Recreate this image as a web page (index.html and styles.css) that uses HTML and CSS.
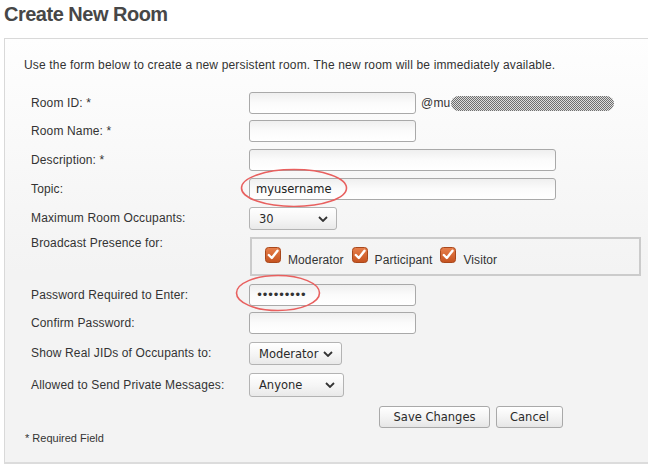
FILE: index.html
```html
<!DOCTYPE html>
<html>
<head>
<meta charset="utf-8">
<link rel="stylesheet" href="styles.css">
</head>
<body>
<h1 class="title">Create New Room</h1>
<div class="panel">
  <p class="intro">Use the form below to create a new persistent room. The new room will be immediately available.</p>
  <div class="form">
    <div class="label">Room ID: *</div>
    <div class="cell"><input class="text short" type="text"><span class="domain">@mu</span><span class="scribble"></span></div>

    <div class="label">Room Name: *</div>
    <div class="cell"><input class="text short" type="text"></div>

    <div class="label">Description: *</div>
    <div class="cell"><input class="text long" type="text"></div>

    <div class="label">Topic:</div>
    <div class="cell"><input class="text long" type="text" value="myusername">
      <svg class="mark mark-topic" width="108" height="40" viewBox="0 0 108 40"><ellipse cx="54" cy="20" rx="52.5" ry="18.5" fill="none" stroke="#e8605f" stroke-width="1.6"/></svg>
    </div>

    <div class="label">Maximum Room Occupants:</div>
    <div class="cell"><div class="select sel-occ"><span>30</span><svg width="10" height="6" viewBox="0 0 10 6"><path d="M1 1 L5 5 L9 1" fill="none" stroke="#333" stroke-width="1.8"/></svg></div></div>

    <div class="label label-top">Broadcast Presence for:</div>
    <div class="cell">
      <div class="presence">
        <span class="cb"><svg width="16" height="16" viewBox="0 0 16 16"><defs><linearGradient id="og" x1="0" y1="0" x2="0" y2="1"><stop offset="0" stop-color="#e8804c"/><stop offset="1" stop-color="#c5521f"/></linearGradient></defs><rect x="0.5" y="0.5" width="15" height="15" rx="3" fill="url(#og)" stroke="#a8481c"/><path d="M3.8 8 L6.8 11 L12.5 3.8" fill="none" stroke="#fff" stroke-width="2.4" stroke-linecap="round" stroke-linejoin="round"/></svg></span>
        <span class="cbtext">Moderator</span>
        <span class="cb"><svg width="16" height="16" viewBox="0 0 16 16"><rect x="0.5" y="0.5" width="15" height="15" rx="3" fill="url(#og)" stroke="#a8481c"/><path d="M3.8 8 L6.8 11 L12.5 3.8" fill="none" stroke="#fff" stroke-width="2.4" stroke-linecap="round" stroke-linejoin="round"/></svg></span>
        <span class="cbtext">Participant</span>
        <span class="cb"><svg width="16" height="16" viewBox="0 0 16 16"><rect x="0.5" y="0.5" width="15" height="15" rx="3" fill="url(#og)" stroke="#a8481c"/><path d="M3.8 8 L6.8 11 L12.5 3.8" fill="none" stroke="#fff" stroke-width="2.4" stroke-linecap="round" stroke-linejoin="round"/></svg></span>
        <span class="cbtext">Visitor</span>
      </div>
    </div>

    <div class="label">Password Required to Enter:</div>
    <div class="cell"><input class="text short pw" type="password" value="123456789">
      <svg class="mark mark-pw" width="86" height="38" viewBox="0 0 86 38"><ellipse cx="43" cy="19" rx="41.5" ry="17.5" fill="none" stroke="#e8605f" stroke-width="1.6"/></svg>
    </div>

    <div class="label">Confirm Password:</div>
    <div class="cell"><input class="text short" type="password"></div>

    <div class="label lh23">Show Real JIDs of Occupants to:</div>
    <div class="cell"><div class="select sel-jid"><span>Moderator</span><svg width="10" height="6" viewBox="0 0 10 6"><path d="M1 1 L5 5 L9 1" fill="none" stroke="#333" stroke-width="1.8"/></svg></div></div>

    <div class="label lh24">Allowed to Send Private Messages:</div>
    <div class="cell"><div class="select sel-pm"><span>Anyone</span><svg width="10" height="6" viewBox="0 0 10 6"><path d="M1 1 L5 5 L9 1" fill="none" stroke="#333" stroke-width="1.8"/></svg></div></div>

    <div></div>
    <div class="cell buttons"><button class="btn btn-save">Save Changes</button><button class="btn btn-cancel">Cancel</button></div>
  </div>
  <p class="required">* Required Field</p>
</div>
</body>
</html>
```
FILE: styles.css
```css
html, body {
  margin: 0;
  padding: 0;
  background: #fff;
  overflow: hidden;
}
body {
  font-family: "Liberation Sans", Arial, sans-serif;
  color: #333;
  width: 648px;
  height: 471px;
}
.title {
  margin: 0 0 12px 0;
  padding: 2px 0 0 4px;
  font-size: 20px;
  line-height: 24px;
  font-weight: bold;
  letter-spacing: -0.5px;
  color: #474747;
}
.panel {
  margin: 0 -20px 0 4px;
  border: 1px solid #d9d9d9;
  border-bottom: 2px solid #dcdcdc;
  background: linear-gradient(#fefefe, #f3f3f3 55%, #f3f3f3);
  padding: 18px 0 17px 19px;
}
.intro {
  margin: 0 0 19px 0;
  font-size: 12px;
  line-height: 16px;
  letter-spacing: 0.16px;
}
.form {
  margin-left: 7px;
  display: grid;
  grid-template-columns: 218px 1fr;
  grid-template-rows: 28px 29px 29px 29px 30px 47px 28px 30px 31px 33px 22px;
  align-items: start;
}
.label {
  font-size: 12px;
  line-height: 22px;
  letter-spacing: 0.14px;
  white-space: nowrap;
}
.label-top { line-height: 12px; }
.lh23 { line-height: 23px; }
.lh24 { line-height: 24px; }
.cell {
  position: relative;
  display: flex;
  align-items: center;
}
.text {
  box-sizing: border-box;
  height: 22px;
  margin: 0;
  border: 1px solid #a9a9a9;
  border-radius: 3px;
  background: linear-gradient(#efefef, #fbfbfb 50%, #fff);
  padding: 0 6px;
  font-family: "DejaVu Sans", Verdana, sans-serif;
  font-size: 11.5px;
  color: #222;
  outline: none;
}
.short { width: 167px; }
.long { width: 307px; }
.pw {
  letter-spacing: -1.6px;
  font-size: 12px;
  color: #333;
}
.domain {
  margin-left: 5px;
  font-size: 12px;
  letter-spacing: 0.2px;
  color: #333;
}
.scribble {
  display: inline-block;
  width: 163px;
  height: 15px;
  margin-left: 1px;
  border-radius: 8px;
  background: repeating-conic-gradient(#6e6e6e 0 25%, #dcdcdc 0 50%) 0 0 / 2px 2px;
}
.mark {
  position: absolute;
  pointer-events: none;
}
.mark-topic { left: -9px; top: -10px; }
.mark-pw { left: -14px; top: -10px; }
.select {
  box-sizing: border-box;
  display: flex;
  align-items: center;
  justify-content: space-between;
  border: 1px solid #b3b3b3;
  border-radius: 3px;
  background: linear-gradient(#fff, #f6f6f6 50%, #e9e9e9);
  padding: 0 8px 0 9px;
  font-family: "DejaVu Sans", Verdana, sans-serif;
  font-size: 11.5px;
  color: #2a2a2a;
}
.sel-occ { width: 88px; height: 23px; }
.sel-jid { width: 93px; height: 23px; }
.sel-pm { width: 95px; height: 24px; }
.presence {
  box-sizing: border-box;
  margin-left: 1px;
  width: 391px;
  height: 39px;
  border: 2px solid #cbcbcb;
  padding: 8px 0 0 13px;
  display: flex;
  align-items: flex-start;
}
.cb {
  width: 16px;
  height: 16px;
  display: block;
}
.cb svg { display: block; }
.cbtext {
  font-size: 12px;
  line-height: 14px;
  margin: 6px 8px 0 7px;
  letter-spacing: 0.1px;
  color: #333;
}
.buttons {
  padding-left: 130px;
  gap: 6px;
}
.btn {
  box-sizing: border-box;
  height: 22px;
  margin: 0;
  border: 1px solid #a9a9a9;
  border-radius: 3px;
  background: linear-gradient(#fff, #f4f4f4 50%, #e6e6e6);
  font-family: "DejaVu Sans", Verdana, sans-serif;
  font-size: 11.5px;
  color: #2a2a2a;
  padding: 0;
}
.btn-save { width: 111px; }
.btn-cancel { width: 67px; }
.required {
  margin: 4px 0 0 1px;
  font-size: 11px;
  line-height: 13px;
  color: #333;
}
```
